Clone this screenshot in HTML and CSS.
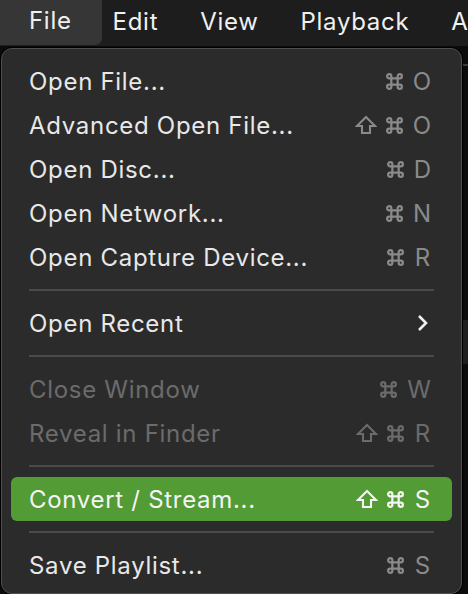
FILE: index.html
```html
<!DOCTYPE html>
<html>
<head>
<meta charset="utf-8">
<link rel="stylesheet" href="styles.css">
</head>
<body>
<div class="screen">
  <div class="menubar">
    <div class="mb-item active">File</div>
    <div class="mb-item">Edit</div>
    <div class="mb-item">View</div>
    <div class="mb-item">Playback</div>
    <div class="mb-item last">A</div>
  </div>
  <div class="backdrop">
    <div class="strip s1"></div>
    <div class="strip s2"></div>
  </div>
  <div class="menu">
    <div class="row"><span class="label">Open File...</span><span class="sc"><svg class="cmd" viewBox="0 0 18 18"><path d="M6 6h6v6H6zM6 6H4a2 2 0 1 1 2-2v10a2 2 0 1 1-2-2h10a2 2 0 1 1-2 2V4a2 2 0 1 1 2 2z"/></svg><span class="key">O</span></span></div>
    <div class="row"><span class="label">Advanced Open File...</span><span class="sc"><svg class="shift" viewBox="0 0 22 20"><path d="M11 2L2 11h5v7h8v-7h5z"/></svg><svg class="cmd" viewBox="0 0 18 18"><path d="M6 6h6v6H6zM6 6H4a2 2 0 1 1 2-2v10a2 2 0 1 1-2-2h10a2 2 0 1 1-2 2V4a2 2 0 1 1 2 2z"/></svg><span class="key">O</span></span></div>
    <div class="row"><span class="label">Open Disc...</span><span class="sc"><svg class="cmd" viewBox="0 0 18 18"><path d="M6 6h6v6H6zM6 6H4a2 2 0 1 1 2-2v10a2 2 0 1 1-2-2h10a2 2 0 1 1-2 2V4a2 2 0 1 1 2 2z"/></svg><span class="key">D</span></span></div>
    <div class="row"><span class="label">Open Network...</span><span class="sc"><svg class="cmd" viewBox="0 0 18 18"><path d="M6 6h6v6H6zM6 6H4a2 2 0 1 1 2-2v10a2 2 0 1 1-2-2h10a2 2 0 1 1-2 2V4a2 2 0 1 1 2 2z"/></svg><span class="key">N</span></span></div>
    <div class="row"><span class="label">Open Capture Device...</span><span class="sc"><svg class="cmd" viewBox="0 0 18 18"><path d="M6 6h6v6H6zM6 6H4a2 2 0 1 1 2-2v10a2 2 0 1 1-2-2h10a2 2 0 1 1-2 2V4a2 2 0 1 1 2 2z"/></svg><span class="key">R</span></span></div>
    <div class="sep"></div>
    <div class="row"><span class="label">Open Recent</span><span class="sc"><svg class="chev" viewBox="0 0 14 18"><path d="M3 2l7 7-7 7"/></svg></span></div>
    <div class="sep"></div>
    <div class="row disabled"><span class="label">Close Window</span><span class="sc"><svg class="cmd" viewBox="0 0 18 18"><path d="M6 6h6v6H6zM6 6H4a2 2 0 1 1 2-2v10a2 2 0 1 1-2-2h10a2 2 0 1 1-2 2V4a2 2 0 1 1 2 2z"/></svg><span class="key">W</span></span></div>
    <div class="row disabled"><span class="label">Reveal in Finder</span><span class="sc"><svg class="shift" viewBox="0 0 22 20"><path d="M11 2L2 11h5v7h8v-7h5z"/></svg><svg class="cmd" viewBox="0 0 18 18"><path d="M6 6h6v6H6zM6 6H4a2 2 0 1 1 2-2v10a2 2 0 1 1-2-2h10a2 2 0 1 1-2 2V4a2 2 0 1 1 2 2z"/></svg><span class="key">R</span></span></div>
    <div class="sep"></div>
    <div class="row selected"><span class="label">Convert / Stream...</span><span class="sc"><svg class="shift" viewBox="0 0 22 20"><path d="M11 2L2 11h5v7h8v-7h5z"/></svg><svg class="cmd" viewBox="0 0 18 18"><path d="M6 6h6v6H6zM6 6H4a2 2 0 1 1 2-2v10a2 2 0 1 1-2-2h10a2 2 0 1 1-2 2V4a2 2 0 1 1 2 2z"/></svg><span class="key">S</span></span></div>
    <div class="sep"></div>
    <div class="row"><span class="label">Save Playlist...</span><span class="sc"><svg class="cmd" viewBox="0 0 18 18"><path d="M6 6h6v6H6zM6 6H4a2 2 0 1 1 2-2v10a2 2 0 1 1-2-2h10a2 2 0 1 1-2 2V4a2 2 0 1 1 2 2z"/></svg><span class="key">S</span></span></div>
  </div>
</div>
</body>
</html>
```

FILE: styles.css
```css
* { box-sizing: border-box; }
html, body { margin: 0; padding: 0; }
body {
  width: 468px;
  height: 594px;
  overflow: hidden;
  background: #0c0c0c;
  font-family: Inter, "Liberation Sans", sans-serif;
  color: #e6e6e6;
}
.screen {
  position: relative;
  width: 468px;
  height: 594px;
  overflow: hidden;
}
.menubar {
  height: 46px;
  background: #1d1d1d;
  display: flex;
  align-items: stretch;
  font-size: 24px;
  letter-spacing: 0.7px;
  color: #f0f0f0;
  overflow: hidden;
}
.mb-item {
  display: flex;
  align-items: center;
  padding: 0 21px;
  padding-bottom: 4px;
}
.mb-item.last { padding-right: 0; }
.mb-item.active {
  background: #363636;
  border-radius: 0 0 7px 0;
  padding: 0 30px 4px 29px;
  margin-right: -10px;
  height: 45px;
}
.backdrop {
  position: absolute;
  left: 0; top: 46px; right: 0; bottom: 0;
  background: #0b0b0b;
}
.strip {
  position: absolute;
  right: 0;
  width: 8px;
  background: #2a2a2a;
}
.s1 { top: 18px; height: 2px; background: #3a3a3a; }
.s2 { top: 274px; height: 44px; background: #1f1f22; }
.menu {
  position: absolute;
  left: 1px;
  top: 48px;
  width: 461px;
  height: 546px;
  background: #2b2b2b;
  border: 1px solid #4e4e4e;
  border-radius: 11px;
  padding: 10px 9px 5px 9px;
  box-shadow: 0 0 0 1px #000;
}
.row {
  height: 44px;
  display: flex;
  align-items: center;
  justify-content: space-between;
  padding: 0 21px 0 18px;
  font-size: 24px;
  letter-spacing: 0.7px;
  color: #e8e8e8;
  border-radius: 6px;
}
.row.disabled { color: #6b6b6b; }
.row.selected { background: #539b35; color: #f4f4f4; }
.sep {
  height: 22px;
  display: flex;
  align-items: center;
  padding: 0 18px;
}
.sep::before {
  content: "";
  display: block;
  width: 100%;
  height: 2px;
  background: #4a4a4a;
}
.sc {
  display: flex;
  align-items: center;
  color: #8a8a8a;
  letter-spacing: 0;
}
.row.disabled .sc { color: #6b6b6b; }
.row.selected .sc { color: #f4f4f4; }
.key {
  display: inline-block;
  min-width: 17px;
  text-align: center;
  margin-left: 9px;
}
.cmd {
  width: 19px;
  height: 19px;
  fill: none;
  stroke: currentColor;
  stroke-width: 2.1;
}
.shift {
  width: 22px;
  height: 20px;
  margin-right: 8px;
  fill: none;
  stroke: currentColor;
  stroke-width: 2.1;
  stroke-linejoin: miter;
}
.chev {
  width: 14px;
  height: 18px;
  fill: none;
  stroke: #f0f0f0;
  stroke-width: 2.6;
  margin-right: 1px;
}
```
